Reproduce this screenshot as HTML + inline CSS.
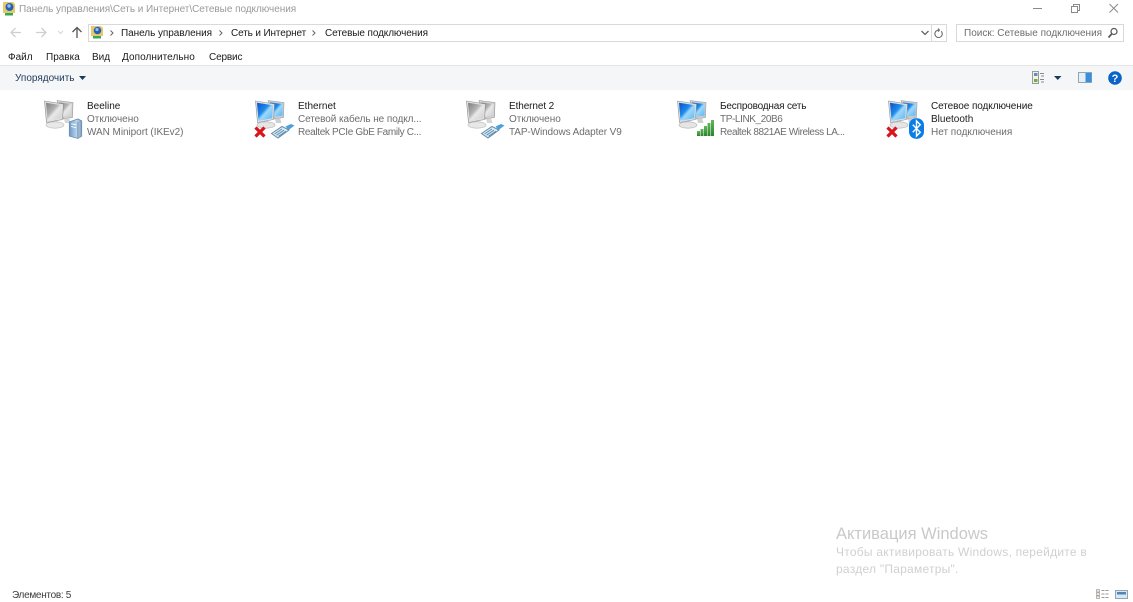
<!DOCTYPE html>
<html lang="ru"><head><meta charset="utf-8"><title>Сетевые подключения</title>
<style>
html,body{margin:0;padding:0;background:#fff}
body{width:1133px;height:599px;position:relative;overflow:hidden;font-family:"Liberation Sans","DejaVu Sans",sans-serif;font-size:10px;color:#1a1a1a}
.t{position:absolute;white-space:nowrap;line-height:13px;filter:blur(.25px)}
.g{color:#6d6d6d}
svg{position:absolute;overflow:visible}
.box{position:absolute;background:#fff;border:1px solid #d9d9d9;box-sizing:border-box}
</style></head><body>
<svg width="0" height="0" style="left:0;top:0">
<defs>
<linearGradient id="b" x1="0" y1="0" x2="1" y2="1"><stop offset="0" stop-color="#0d4fc4"/><stop offset=".42" stop-color="#1f8cec"/><stop offset=".55" stop-color="#9fd8fb"/><stop offset="1" stop-color="#55b4f0"/></linearGradient>
<linearGradient id="s" x1="0" y1="0" x2="1" y2="1"><stop offset="0" stop-color="#7d7d7d"/><stop offset=".42" stop-color="#b4b4b4"/><stop offset=".55" stop-color="#e8e8e8"/><stop offset="1" stop-color="#cdcdcd"/></linearGradient>
<linearGradient id="tw" x1="0" y1="0" x2="1" y2="0"><stop offset="0" stop-color="#6d9ac6"/><stop offset=".6" stop-color="#bcd4ea"/><stop offset="1" stop-color="#7f9fbd"/></linearGradient>
<linearGradient id="wf" x1="0" y1="0" x2="0" y2="1"><stop offset="0" stop-color="#63b85a"/><stop offset="1" stop-color="#2c8232"/></linearGradient>
<symbol id="pcb" viewBox="0 0 32 30" overflow="visible">
<path d="M13 1.500l16 2-.5 15-9 1.500z" fill="#c6cbcf" stroke="#99a3ab" stroke-width=".6"/><path d="M15 3.500l12.500 1.500v11.500l-12 1.500z" fill="url(#b)"/>
<path d="M20 20l5-1 1.500 5H21z" fill="#d0d0d0"/>
<path d="M0.500 2l19 3-1 15.500-16 3z" fill="#dde0e2" stroke="#8b959c" stroke-width=".6"/><path d="M2 3.800l16 2.500-.8 13-13.700 2.500z" fill="url(#b)"/>
<path d="M7 23l6-1 1 3H7.500z" fill="#c8c8c8"/><ellipse cx="11" cy="26" rx="9" ry="3.200" fill="#e5e5e5" stroke="#b0b0b0" stroke-width=".6"/>
</symbol>
<symbol id="pcg" viewBox="0 0 32 30" overflow="visible">
<path d="M13 1.500l16 2-.5 15-9 1.500z" fill="#cfcfcf" stroke="#9a9a9a" stroke-width=".6"/><path d="M15 3.500l12.500 1.500v11.500l-12 1.500z" fill="url(#s)"/>
<path d="M20 20l5-1 1.500 5H21z" fill="#d6d6d6"/>
<path d="M0.500 2l19 3-1 15.500-16 3z" fill="#e0e0e0" stroke="#8c8c8c" stroke-width=".6"/><path d="M2 3.800l16 2.500-.8 13-13.700 2.500z" fill="url(#s)"/>
<path d="M7 23l6-1 1 3H7.500z" fill="#cdcdcd"/><ellipse cx="11" cy="26" rx="9" ry="3.200" fill="#e8e8e8" stroke="#b8b8b8" stroke-width=".6"/>
</symbol>
<symbol id="cable" viewBox="0 0 24 14" overflow="visible">
<path d="M.5 9.500L11 2.500l7 3.500L7 14z" fill="#dfebf4" stroke="#5d8cab" stroke-width="1"/>
<path d="M3.500 10l7.500-5M5.500 11.200L13 6.200M7.500 12.300L15 7.200" stroke="#5f8fb0" stroke-width="1" fill="none"/>
<path d="M14.500 2.500L20 0l3.500 1.500-6 4.500z" fill="#4d9fd8"/>
</symbol>
<symbol id="x" viewBox="0 0 12 12"><path d="M1.500 1.500l9 9M10.500 1.500l-9 9" stroke="#d8141c" stroke-width="3.200" fill="none"/></symbol>
</defs>
</svg>

<!-- titlebar -->
<svg style="left:2px;top:1px" width="14" height="16" viewBox="0 0 14 16"><path d="M1 1h10l2 2v9H1z" fill="#e6c968"/><circle cx="7.500" cy="6" r="4" fill="#2a5fb8"/><circle cx="7" cy="5" r="1.700" fill="#8ec0ea"/><rect x="3" y="12" width="8" height="2.500" fill="#35a853"/></svg>
<div class="t" style="left:19px;top:3px;color:#9a9a9a;letter-spacing:-.04px">Панель управления\Сеть и Интернет\Сетевые подключения</div>
<svg style="left:1033px;top:3px" width="90" height="12" viewBox="0 0 90 12" fill="none" stroke="#8a8a8a" stroke-width="1"><path d="M0 5.500h9"/><path d="M38.500 3.500h6v6h-6zM40.500 3.500v-2h6v6h-2"/><path d="M76.500 1l8.500 8.500M85 1l-8.500 8.500"/></svg>

<!-- nav -->
<svg style="left:10px;top:26px" width="78" height="13" viewBox="0 0 78 13" fill="none" stroke-width="1.300"><path d="M1 6.500h10M5.500 2L1 6.500 5.500 11" stroke="#cfcfcf"/><path d="M26 6.500h10M31.500 2L36 6.500 31.500 11" stroke="#cfcfcf"/><path d="M48 5l2.500 2.500L53 5" stroke="#d5d5d5" stroke-width="1"/><path d="M67 1.500v10.500M62.500 6L67 1.500 71.500 6" stroke="#555"/></svg>
<div class="box" style="left:88px;top:24px;width:859px;height:18px"></div>
<div style="position:absolute;left:931px;top:25px;width:1px;height:16px;background:#d9d9d9"></div>
<svg style="left:90px;top:25px" width="14" height="15" viewBox="0 0 14 15"><path d="M1 1h10l2 2v8H1z" fill="#e6c968"/><circle cx="7.500" cy="5.500" r="3.800" fill="#2a5fb8"/><circle cx="7" cy="4.500" r="1.600" fill="#8ec0ea"/><rect x="3" y="11" width="8" height="2.500" fill="#35a853"/></svg>
<svg style="left:109px;top:29px" width="320" height="8" viewBox="0 0 320 8" fill="none" stroke="#666"><path d="M1.500 1.500l2.500 2.500-2.500 2.500M110.500 1.500l2.500 2.500-2.500 2.500M203.500 1.500l2.500 2.500-2.500 2.500"/></svg>
<div class="t" style="left:121px;top:27px;letter-spacing:-.05px">Панель управления</div>
<div class="t" style="left:231px;top:27px;letter-spacing:-.13px">Сеть и Интернет</div>
<div class="t" style="left:325px;top:27px;letter-spacing:-.1px">Сетевые подключения</div>
<svg style="left:921px;top:27px" width="25" height="12" viewBox="0 0 25 12" fill="none" stroke="#666"><path d="M0.500 4l3.500 3.500L7.500 4" stroke-width="1.300"/><path d="M21.200 3.200a3.700 3.700 0 1 1-2.700-1.100M18 0.500l1.500 1.600-1.500 1.600" stroke-width="1" transform="translate(-1 1)"/></svg>
<div class="box" style="left:956px;top:24px;width:168px;height:18px"></div>
<div class="t g" style="left:964px;top:27px">Поиск: Сетевые подключения</div>
<svg style="left:1107px;top:27px" width="12" height="12" viewBox="0 0 12 12" fill="none" stroke="#555"><circle cx="7" cy="4.500" r="3" stroke-width="1.200"/><path d="M4.800 6.800L1.500 10.500" stroke-width="1.700"/></svg>

<!-- menu -->
<div class="t" style="left:8px;top:51px">Файл</div>
<div class="t" style="left:46px;top:51px">Правка</div>
<div class="t" style="left:92px;top:51px">Вид</div>
<div class="t" style="left:122px;top:51px;letter-spacing:.07px">Дополнительно</div>
<div class="t" style="left:209px;top:51px;letter-spacing:-.15px">Сервис</div>

<!-- toolbar -->
<div style="position:absolute;left:0;top:65px;width:1133px;height:25px;background:#f5f6f7;border-top:1px solid #e6e6e6;box-sizing:border-box"></div>
<div class="t" style="left:15px;top:72px;color:#1e3a5a">Упорядочить</div>
<svg style="left:79px;top:76px" width="8" height="5" viewBox="0 0 8 5"><path d="M0 0h7L3.500 4z" fill="#1e3a5a"/></svg>
<svg style="left:1032px;top:71px" width="30" height="14" viewBox="0 0 30 14"><rect x=".5" y=".5" width="6" height="12" fill="#f4f1e0" stroke="#9a9a9a"/><rect x="2" y="2" width="3.500" height="3" fill="#5a8fcc"/><rect x="2" y="8" width="3.500" height="3" fill="#6ab04c"/><path d="M8 2.500h4M9 5h3M8 8.500h4M9 11h3" stroke="#8a8a8a"/><path d="M22 5h7.500l-3.750 4z" fill="#1e3a5a"/></svg>
<svg style="left:1078px;top:72px" width="14" height="11" viewBox="0 0 14 11"><rect x=".5" y=".5" width="13" height="10" fill="#e8eef4" stroke="#8fa5b8"/><rect x="7.500" y="1" width="6" height="9" fill="#3a8fdc"/></svg>
<svg style="left:1108px;top:71px" width="14" height="14" viewBox="0 0 14 14"><circle cx="7" cy="7" r="6.800" fill="#0b62c8"/><text x="7" y="11" font-family="Liberation Sans" font-weight="bold" font-size="11" text-anchor="middle" fill="#fff">?</text></svg>

<!-- item 1 -->
<svg style="left:44px;top:99px" width="32" height="30"><use href="#pcg" width="32" height="30"/></svg>
<svg style="left:68px;top:118px" width="15" height="21" viewBox="0 0 15 22"><path d="M1 4l9-3 4 2v16l-4 2.500L1 19z" fill="url(#tw)" stroke="#668db2" stroke-width=".8"/><path d="M3 6l5 1M3 9l5 1" stroke="#fff"/><path d="M10 4v17" stroke="#5f88ae" stroke-width=".8"/></svg>
<div class="t" style="left:87px;top:100px">Beeline</div>
<div class="t g" style="left:87px;top:113px">Отключено</div>
<div class="t g" style="left:87px;top:126px;letter-spacing:-.05px">WAN Miniport (IKEv2)</div>

<!-- item 2 -->
<svg style="left:255px;top:99px" width="32" height="30"><use href="#pcb" width="32" height="30"/></svg>
<svg style="left:254px;top:126px" width="12" height="12"><use href="#x" width="12" height="12"/></svg>
<svg style="left:271px;top:124px" width="24" height="14"><use href="#cable" width="24" height="14"/></svg>
<div class="t" style="left:298px;top:100px">Ethernet</div>
<div class="t g" style="left:298px;top:113px;letter-spacing:-.08px">Сетевой кабель не подкл...</div>
<div class="t g" style="left:298px;top:126px;letter-spacing:-.33px">Realtek PCIe GbE Family C...</div>

<!-- item 3 -->
<svg style="left:466px;top:99px" width="32" height="30"><use href="#pcg" width="32" height="30"/></svg>
<svg style="left:481px;top:124px" width="24" height="14"><use href="#cable" width="24" height="14"/></svg>
<div class="t" style="left:509px;top:100px;letter-spacing:-.1px">Ethernet 2</div>
<div class="t g" style="left:509px;top:113px">Отключено</div>
<div class="t g" style="left:509px;top:126px;letter-spacing:-.1px">TAP-Windows Adapter V9</div>

<!-- item 4 -->
<svg style="left:677px;top:99px" width="32" height="30"><use href="#pcb" width="32" height="30"/></svg>
<svg style="left:697px;top:120px" width="18" height="16" viewBox="0 0 18 16" fill="url(#wf)"><rect x="0" y="11" width="3" height="5"/><rect x="3.500" y="9" width="3" height="7"/><rect x="7" y="6" width="3" height="10"/><rect x="10.500" y="3" width="3" height="13"/><rect x="14" y="0" width="3" height="16"/></svg>
<div class="t" style="left:720px;top:100px;letter-spacing:-.18px">Беспроводная сеть</div>
<div class="t g" style="left:720px;top:113px;letter-spacing:-.4px">TP-LINK_20B6</div>
<div class="t g" style="left:720px;top:126px;letter-spacing:-.42px">Realtek 8821AE Wireless LA...</div>

<!-- item 5 -->
<svg style="left:888px;top:99px" width="32" height="30"><use href="#pcb" width="32" height="30"/></svg>
<svg style="left:886px;top:126px" width="12" height="12"><use href="#x" width="12" height="12"/></svg>
<svg style="left:909px;top:118px" width="15" height="21" viewBox="0 0 16 22"><rect width="16" height="22" rx="7.500" fill="#0a7ee6"/><path d="M4 7l8 8-4 4V3l4 4-8 8" fill="none" stroke="#fff" stroke-width="1.500"/></svg>
<div class="t" style="left:931px;top:100px;letter-spacing:-.08px">Сетевое подключение</div>
<div class="t" style="left:931px;top:113px">Bluetooth</div>
<div class="t g" style="left:931px;top:126px">Нет подключения</div>

<!-- watermark -->
<div class="t" style="left:836px;top:524px;font-size:16.500px;line-height:20px;color:#c9c9c9">Активация Windows</div>
<div class="t" style="left:836px;top:544px;font-size:12px;line-height:17px;color:#d0d0d0;letter-spacing:.25px">Чтобы активировать Windows, перейдите в<br>раздел "Параметры".</div>

<!-- status -->
<div class="t" style="left:12px;top:589px;color:#3a3a3a;letter-spacing:-.3px">Элементов: 5</div>
<svg style="left:1096px;top:589px" width="32" height="10" viewBox="0 0 32 10"><rect x=".5" y=".5" width="3" height="2.500" fill="#eee" stroke="#9a8a80" stroke-width=".6"/><rect x=".5" y="3.800" width="3" height="2.500" fill="#eee" stroke="#9a8a80" stroke-width=".6"/><rect x=".5" y="7" width="3" height="2.500" fill="#eee" stroke="#9a8a80" stroke-width=".6"/><path d="M5.500 1.500h3M9.500 1.500h3M5.500 5h3M9.500 5h3M5.500 8.500h3M9.500 8.500h3" stroke="#9a9a9a"/><rect x="19.500" y="1.500" width="12" height="8" fill="#dbe8f2" stroke="#8fa5b8"/><rect x="21" y="3" width="9" height="2.500" fill="#4d86b8"/></svg>
</body></html>
